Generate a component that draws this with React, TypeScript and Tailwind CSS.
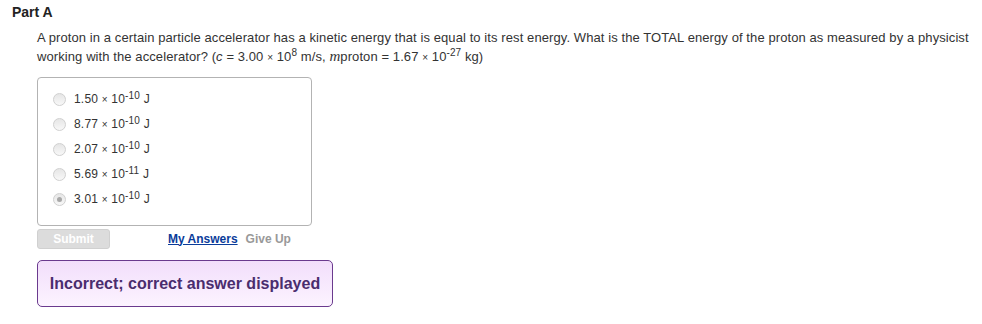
import React from "react";

const answers = [
  { m: "1.50", e: "-10", checked: false },
  { m: "8.77", e: "-10", checked: false },
  { m: "2.07", e: "-10", checked: false },
  { m: "5.69", e: "-11", checked: false },
  { m: "3.01", e: "-10", checked: true },
];

function Radio({ checked }: { checked: boolean }) {
  return (
    <span className="relative inline-block w-[13px] h-[13px] rounded-full border border-[#d0d0d0] bg-gradient-to-b from-[#e6e6e6] to-[#f8f8f8] shrink-0">
      {checked && (
        <span className="absolute left-[3px] top-[3px] w-[5px] h-[5px] rounded-full bg-[#a8a8a8]" />
      )}
    </span>
  );
}

export default function App() {
  return (
    <div className="w-[982px] h-[324px] bg-white text-[#333] font-['Liberation_Sans',Arial,sans-serif]">
      <div className="pl-[12px] pt-[4px] text-[14px] font-bold leading-[17px] text-[#222]">Part A</div>
      <div className="pl-[37px] pr-[10px] pt-[7px] text-[13px] leading-[19px]">
        <p className="tracking-[0.09px]">
          A proton in a certain particle accelerator has a kinetic energy that is equal to its rest energy. What is the TOTAL energy of the proton as measured by a physicist working with the accelerator? (<i>c</i> = 3.00 <span className="text-[10px]">×</span> 10<sup className="text-[10px] top-[-5px]">8</sup> m/s, <i className="font-['Liberation_Serif',serif] text-[15px]">m</i>proton = 1.67 <span className="text-[10px]">×</span> 10<sup className="text-[10px] top-[-5px]">-27</sup> kg)
        </p>
        <div className="mt-[10px] w-[275px] h-[149px] border border-[#b3b3b3] rounded-[4px] pt-[9px] pl-[15px]">
          {answers.map((a, i) => (
            <div key={i} className="flex items-center h-[25px] text-[12px]">
              <Radio checked={a.checked} />
              <span className="ml-[8px] text-[#333] tracking-[0.2px]">
                {a.m} <span className="text-[10px]">×</span> 10<sup className="text-[10px] top-[-4px]">{a.e}</sup> J
              </span>
            </div>
          ))}
        </div>
        <div className="flex items-center mt-[3px]">
          <div className="w-[73px] h-[20px] rounded-[3px] bg-[#dcdcdc] border border-[#d0d0d0] text-white font-bold text-[12px] flex items-center justify-center">
            Submit
          </div>
          <a className="ml-[58px] text-[12px] font-bold text-[#0a3c9a] underline">My Answers</a>
          <span className="ml-[8px] text-[12px] font-bold text-[#999]">Give Up</span>
        </div>
        <div className="mt-[11px] w-[296px] h-[47px] rounded-[5px] border border-[#6a3a8e] bg-gradient-to-b from-[#f2defb] to-[#fcf3ff] flex items-center justify-center text-[16px] font-bold text-[#4a2d6e]">
          Incorrect; correct answer displayed
        </div>
      </div>
    </div>
  );
}
